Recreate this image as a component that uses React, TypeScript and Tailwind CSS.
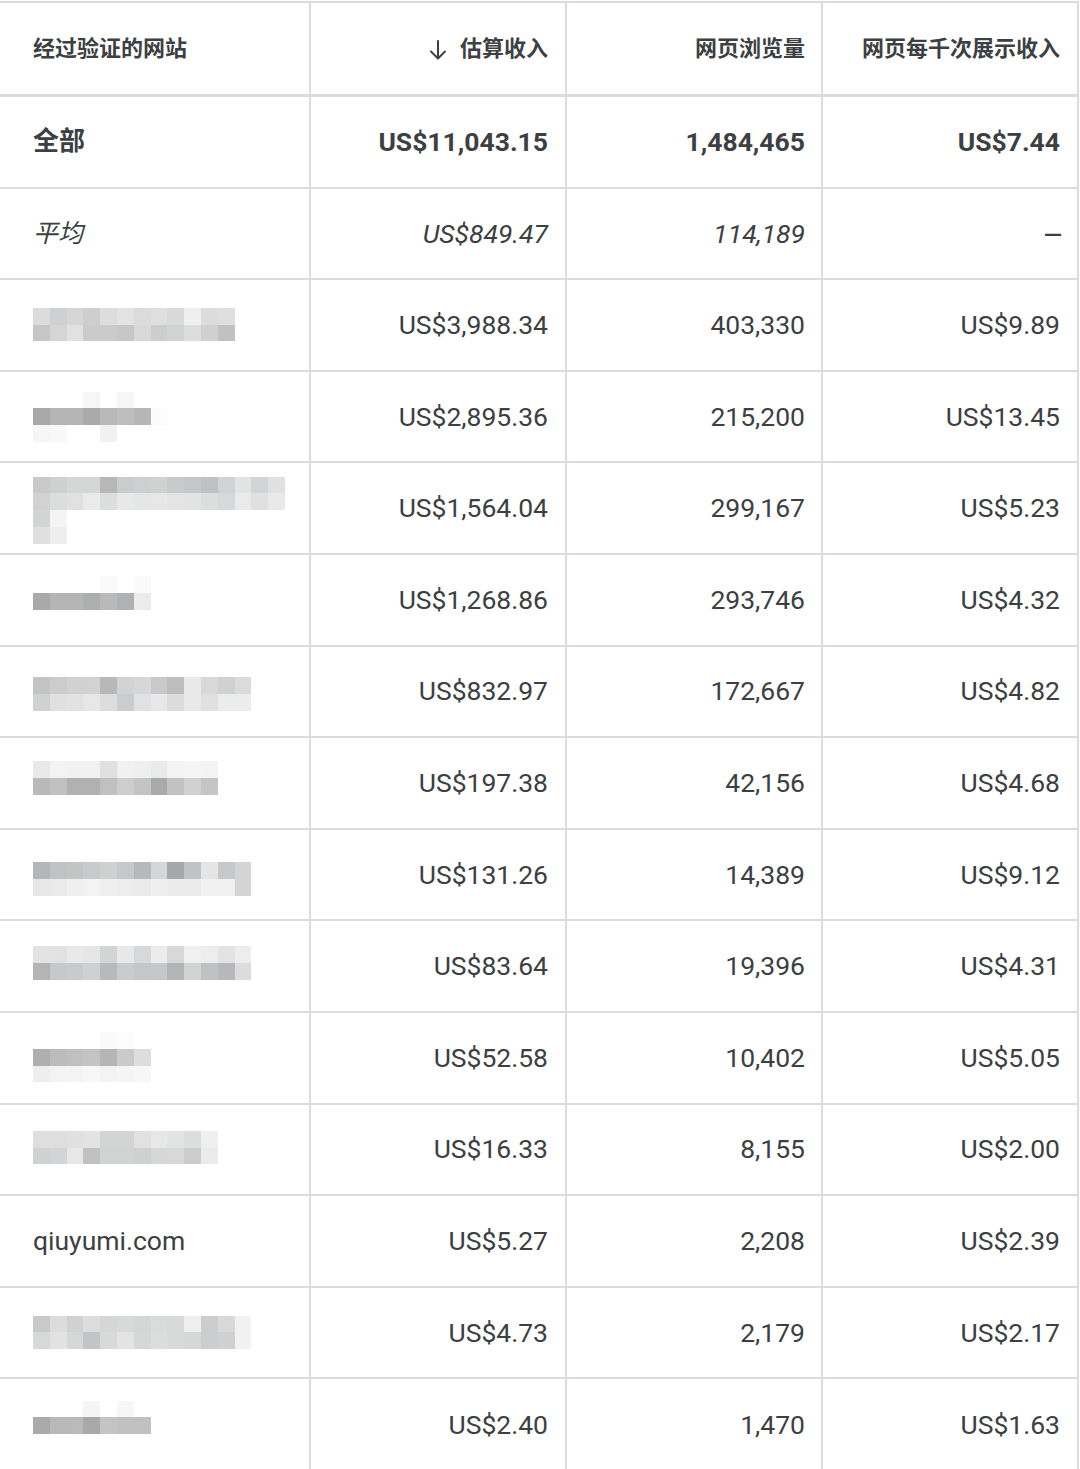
import React from "react";

type Cell = string | null;
type Mosaic = { pt: string; rows: Cell[][] };

const M: Record<string, Mosaic> = {
  s1: {
    pt: "pt-[27.6px]",
    rows: [
      ["#dcdcdc", "#cfd0d2", "#d6d6d7", "#cdcecf", "#dcdddc", "#e3e3e3", "#dadcdb", "#dfdfdf", "#d8dad9", "#efefef", "#dcdcdc", "#dfdfdf"],
      ["#c6c6c7", "#d5d5d5", "#e0e1e0", "#cbcbcc", "#cbcbcc", "#c6c7c8", "#d8d8d8", "#cccdce", "#d1d2d2", "#dcdedd", "#cfd0d2", "#c1c1c2"],
    ],
  },
  s2: {
    pt: "pt-[19.9px]",
    rows: [
      [null, null, null, "#f6f6f6", null, "#f7f7f7", null],
      ["#a9a9a9", "#b5b5b6", "#b5b5b6", "#a9aaaa", "#b9b9ba", "#bdbebd", "#b5b6b7", "#fafbfa"],
      ["#f6f6f6", "#f8f8f8", null, null, "#f1f1f1", null, null],
    ],
  },
  s3: {
    pt: "pt-[13.2px]",
    rows: [
      ["#c9c9ca", "#cfd0d0", "#d5d6d6", "#d5d6d6", "#b7b7b8", "#cbcccd", "#cecfd0", "#d0d1d1", "#c9cacb", "#c6c7c8", "#c0c1c2", "#d1d2d3", "#e2e3e3", "#d3d4d5", "#dfe0df"],
      ["#d2d2d2", "#dcdddd", "#e0e1e0", "#e9eae9", "#dcdddd", "#e8e8e8", "#e5e6e6", "#e6e7e6", "#e3e4e3", "#e2e3e3", "#dcdddd", "#d7d8da", "#eaeaea", "#e0e0e0", "#e9e9e9"],
      ["#d3d4d4", "#f4f4f4"],
      ["#dfe0df", "#eeeeee"],
    ],
  },
  s4: {
    pt: "pt-[21.5px]",
    rows: [
      [null, null, null, null, "#fafafa", null, "#fafafa"],
      ["#a9a9aa", "#b5b5b6", "#b5b5b6", "#adaeae", "#b9b9ba", "#b0b1b2", "#ececec"],
    ],
  },
  s5: {
    pt: "pt-[30.8px]",
    rows: [
      ["#c3c4c5", "#cbcccd", "#d1d1d1", "#d1d3d3", "#b8b8b9", "#d1d2d3", "#d6d7d8", "#c8c9ca", "#bdbdbe", "#e9e9e9", "#d7d8d8", "#d0d1d2", "#dadbdc"],
      ["#d0d1d1", "#dfe0df", "#e1e2e1", "#e6e7e6", "#dcdddd", "#cbcccd", "#e0e1e2", "#e8e8e8", "#dbdcdc", "#e9e9e9", "#e0e0e0", "#ebecec", "#ececec"],
    ],
  },
  s6: {
    pt: "pt-[23.1px]",
    rows: [
      ["#e8e9e8", "#f3f3f3", "#f1f1f1", "#f1f1f1", "#e0e0e0", "#f1f1f1", "#efefef", "#e9eaea", "#f4f4f4", "#f5f5f5", "#f3f3f3"],
      ["#b9b9ba", "#c0c1c1", "#b0b1b2", "#b0b1b2", "#bfc0c0", "#cdcecf", "#c3c4c4", "#a9aaab", "#c1c2c2", "#d0d1d1", "#c4c5c6"],
    ],
  },
  s7: {
    pt: "pt-[32.4px]",
    rows: [
      ["#b5b6b7", "#c1c2c3", "#c3c4c4", "#c9cacb", "#cfd0d0", "#c7c8c9", "#b7b8b9", "#d5d6d6", "#a6a7a8", "#c1c2c3", "#e4e5e4", "#c7c8c9", "#d4d4d4"],
      ["#e6e7e6", "#eaeaea", "#efefef", "#f3f3f3", "#efefef", "#ededed", "#eaeaea", "#efefef", "#eaebea", "#eaebea", "#f1f1f1", "#f0f0f0", "#d4d4d4"],
    ],
  },
  s8: {
    pt: "pt-[24.7px]",
    rows: [
      ["#e3e3e3", "#e1e2e1", "#e9e9e9", "#e6e6e6", "#d3d5d5", "#e8e8e8", "#d7d8da", "#ececec", "#d7d8d8", "#f0f0f0", "#ededed", "#e3e3e3", "#ededed"],
      ["#b4b4b5", "#c7c8c9", "#c9cacb", "#cfd0d1", "#b8b9ba", "#cacbcc", "#c5c6c7", "#c6c7c8", "#b3b4b5", "#d2d3d3", "#c0c1c2", "#b7b8b9", "#dcdcdc"],
    ],
  },
  s9: {
    pt: "pt-[19px]",
    rows: [
      [null, null, null, null, "#fafafa", "#fcfcfc", null],
      ["#aeafb0", "#bbbcbd", "#bfc0c1", "#c3c4c4", "#b4b5b6", "#c9cacb", "#dcdddf"],
      ["#eeeeee", "#f3f3f3", "#f4f4f4", "#f6f7f6", "#f3f3f3", "#f5f5f5", "#f7f7f7"],
    ],
  },
  s10: {
    pt: "pt-[26.3px]",
    rows: [
      ["#dedede", "#dedede", "#e0e0e0", "#e2e3e2", "#d3d5d5", "#d3d5d5", "#e1e1e1", "#e7e7e7", "#e2e3e3", "#dcdedd", "#eeefee"],
      ["#d0d1d2", "#d3d4d5", "#e7e7e7", "#c0c1c1", "#d2d3d3", "#d2d3d3", "#cfd0d1", "#d6d7d7", "#d8d8d8", "#cbcccd", "#eaebea"],
    ],
  },
  s11: {
    pt: "pt-[27.9px]",
    rows: [
      ["#c9c9ca", "#dcdcdc", "#d0d1d2", "#dcdddc", "#d5d6d6", "#d8d9d9", "#d5d6d6", "#dadbdb", "#d8d9d9", "#efefef", "#cccdce", "#d8d8d8", "#f1f1f1"],
      ["#d7d8d8", "#e1e2e1", "#d6d7d7", "#c3c4c5", "#d8d9d9", "#e3e3e3", "#d6d7d7", "#dcdddd", "#d8d9d9", "#d6d7d7", "#cccdce", "#cfd0d1", "#f1f1f1"],
    ],
  },
  s12: {
    pt: "pt-[21.2px]",
    rows: [
      [null, null, null, "#f4f5f4", null, "#f7f7f7", null],
      ["#aaaaab", "#b9b9ba", "#bababb", "#a9a9aa", "#c3c4c4", "#c1c1c2", "#c1c1c2"],
    ],
  },
};

type Row = {
  kind: "total" | "avg" | "site" | "text";
  site?: string;
  label?: string;
  rev: string;
  views: string;
  rpm: string;
};

const rows: Row[] = [
  { kind: "total", label: "全部", rev: "US$11,043.15", views: "1,484,465", rpm: "US$7.44" },
  { kind: "avg", label: "平均", rev: "US$849.47", views: "114,189", rpm: "—" },
  { kind: "site", site: "s1", rev: "US$3,988.34", views: "403,330", rpm: "US$9.89" },
  { kind: "site", site: "s2", rev: "US$2,895.36", views: "215,200", rpm: "US$13.45" },
  { kind: "site", site: "s3", rev: "US$1,564.04", views: "299,167", rpm: "US$5.23" },
  { kind: "site", site: "s4", rev: "US$1,268.86", views: "293,746", rpm: "US$4.32" },
  { kind: "site", site: "s5", rev: "US$832.97", views: "172,667", rpm: "US$4.82" },
  { kind: "site", site: "s6", rev: "US$197.38", views: "42,156", rpm: "US$4.68" },
  { kind: "site", site: "s7", rev: "US$131.26", views: "14,389", rpm: "US$9.12" },
  { kind: "site", site: "s8", rev: "US$83.64", views: "19,396", rpm: "US$4.31" },
  { kind: "site", site: "s9", rev: "US$52.58", views: "10,402", rpm: "US$5.05" },
  { kind: "site", site: "s10", rev: "US$16.33", views: "8,155", rpm: "US$2.00" },
  { kind: "text", label: "qiuyumi.com", rev: "US$5.27", views: "2,208", rpm: "US$2.39" },
  { kind: "site", site: "s11", rev: "US$4.73", views: "2,179", rpm: "US$2.17" },
  { kind: "site", site: "s12", rev: "US$2.40", views: "1,470", rpm: "US$1.63" },
];

function MosaicBlock({ m }: { m: Mosaic }) {
  return (
    <div className={`flex flex-col ${m.pt}`}>
      {m.rows.map((r, i) => (
        <div key={i} className="flex">
          {r.map((c, j) => (
            <div
              key={j}
              className="w-[16.8px] h-[16.8px]"
              style={{ backgroundColor: c ?? "transparent" }}
            />
          ))}
        </div>
      ))}
    </div>
  );
}

function DownArrow() {
  return (
    <svg width="20" height="22" viewBox="0 0 20 22" fill="none" className="mr-[12px] mt-[2px]">
      <path d="M10 2 V19" stroke="#3c4043" strokeWidth="2" strokeLinecap="round" />
      <path d="M3 12.5 L10 19.5 L17 12.5" stroke="#3c4043" strokeWidth="2" strokeLinecap="round" strokeLinejoin="round" />
    </svg>
  );
}

export default function App() {
  const font = { fontFamily: 'Roboto, "Noto Sans CJK SC", sans-serif' };
  return (
    <div className="w-[1080px] h-[1469px] bg-white overflow-hidden pt-[1px] text-[#3c4043]" style={font}>
      <div className="w-[1079px] border-t-2 border-[#dadce0]">
        {/* header */}
        <div className="grid grid-cols-[311px_256px_256px_256px] h-[94px] border-b-[3px] border-[#dadce0] text-[22px] font-semibold">
          <div className="flex items-center pl-[33px] border-r-2 border-[#dadce0]">经过验证的网站</div>
          <div className="flex items-center justify-end pr-[17px] border-r-2 border-[#dadce0]">
            <DownArrow />
            估算收入
          </div>
          <div className="flex items-center justify-end pr-[16px] border-r-2 border-[#dadce0]">网页浏览量</div>
          <div className="flex items-center justify-end pr-[17px] border-r-2 border-[#dadce0]">网页每千次展示收入</div>
        </div>
        {rows.map((r, i) => {
          const last = i === rows.length - 1;
          const style =
            r.kind === "total"
              ? "font-bold"
              : r.kind === "avg"
              ? "italic"
              : "";
          return (
            <div
              key={i}
              className={`grid grid-cols-[311px_256px_256px_256px] h-[91.6px] text-[26.5px] ${style} ${
                last ? "" : "border-b-2 border-[#dadce0]"
              }`}
            >
              <div className="border-r-2 border-[#dadce0] pl-[33px] flex">
                {r.kind === "site" ? (
                  <MosaicBlock m={M[r.site!]} />
                ) : (
                  <div className={`flex items-center ${r.kind === "total" ? "text-[26px]" : r.kind === "avg" ? "text-[25px]" : ""}`}>
                    {r.label}
                  </div>
                )}
              </div>
              <div className="border-r-2 border-[#dadce0] pr-[17px] flex items-center justify-end">{r.rev}</div>
              <div className="border-r-2 border-[#dadce0] pr-[16px] flex items-center justify-end">{r.views}</div>
              <div className="border-r-2 border-[#dadce0] pr-[17px] flex items-center justify-end">
                {r.kind === "avg" ? (
                  <span className="not-italic font-bold text-[18px] mr-[-2px]" style={{ fontFamily: '"DejaVu Sans", sans-serif' }}>
                    {r.rpm}
                  </span>
                ) : (
                  r.rpm
                )}
              </div>
            </div>
          );
        })}
      </div>
    </div>
  );
}
